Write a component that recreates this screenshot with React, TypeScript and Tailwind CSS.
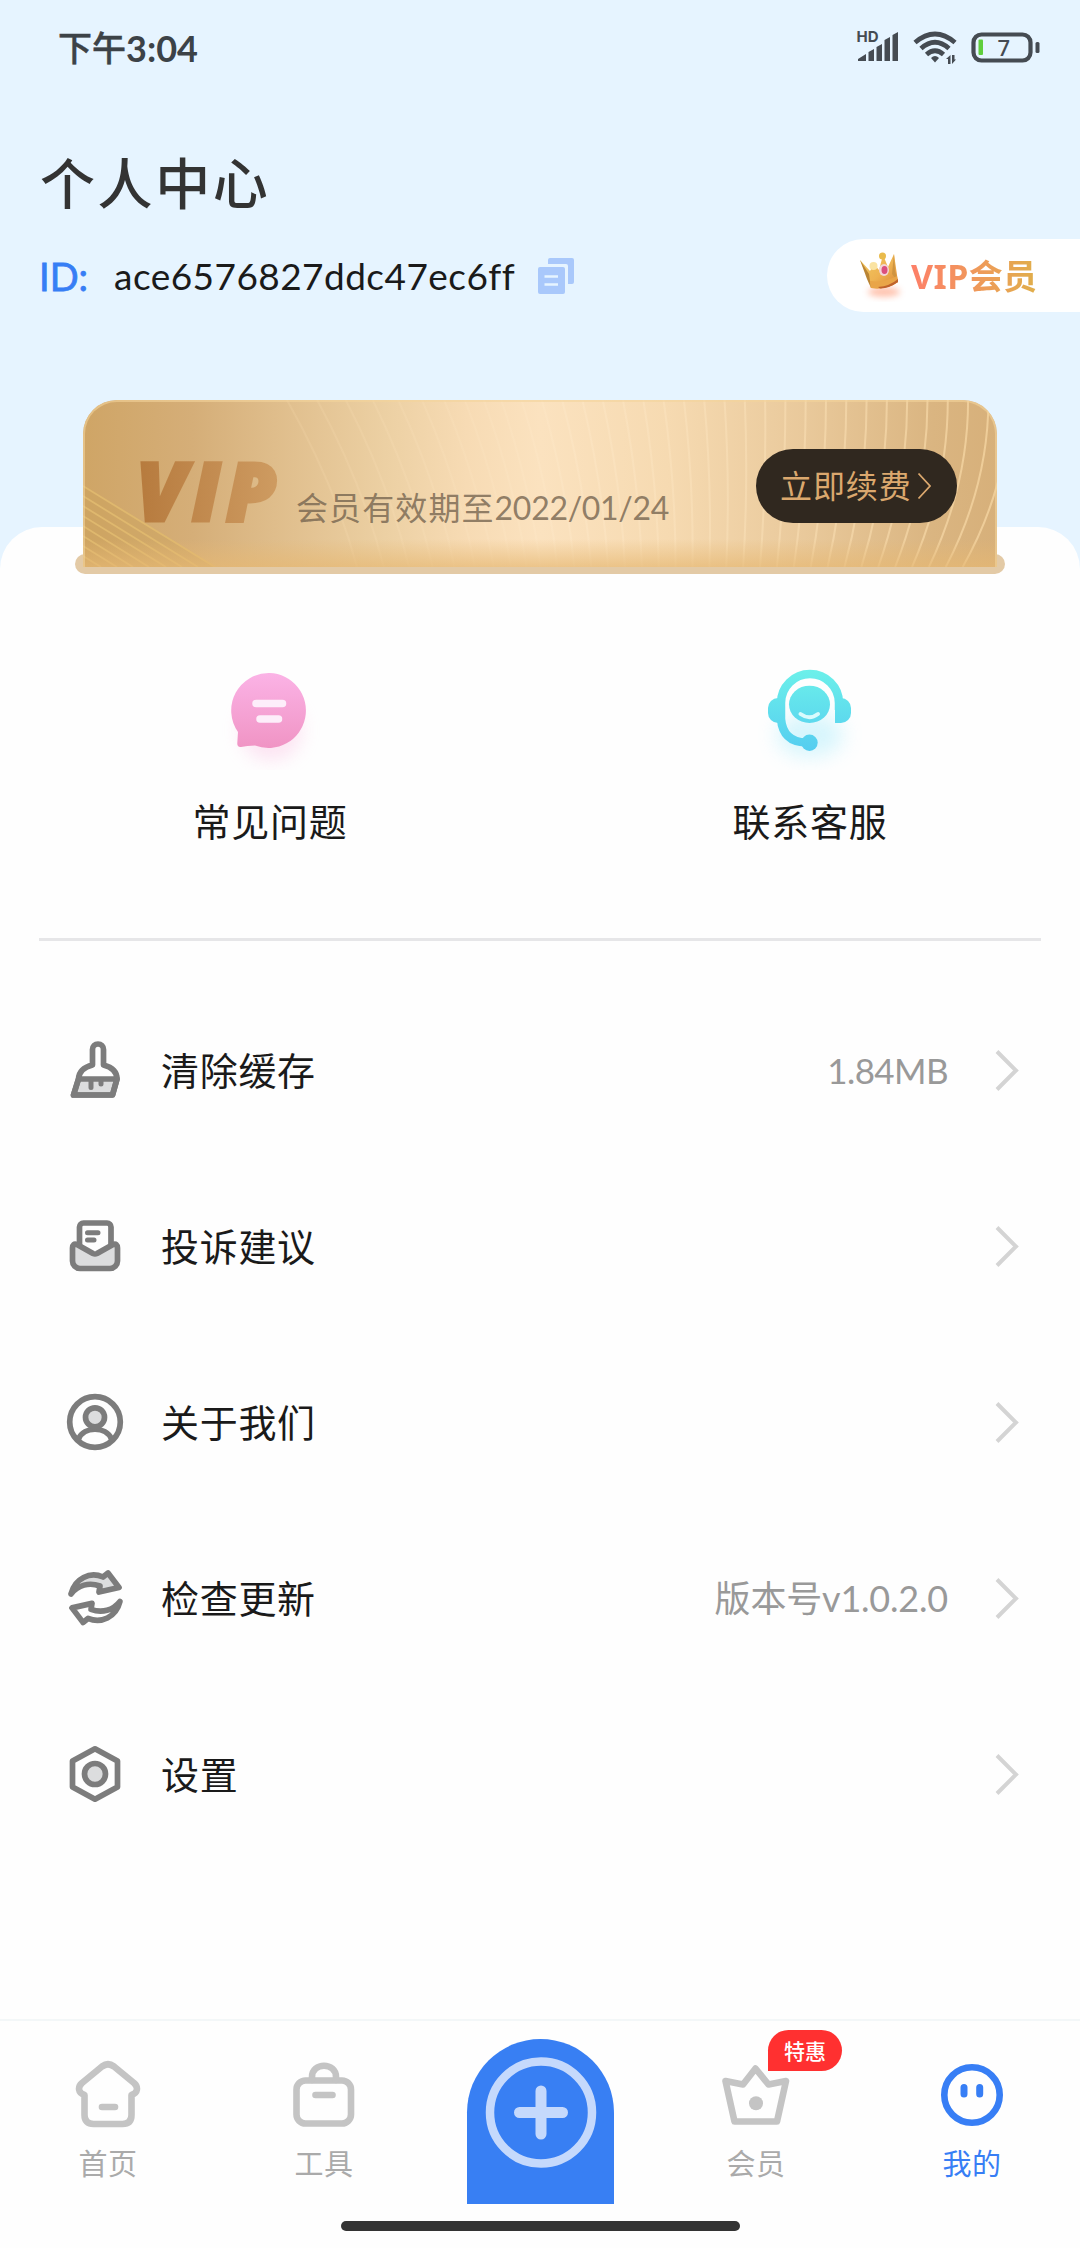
import React from 'react'
import clsx from 'clsx'

type IconProps = {
    children: React.ReactNode
}

const MenuIcon = ({ children }: IconProps) => (
    <svg className="mt-0.5" width="60" height="60" viewBox="0 0 60 60" fill="none" stroke="#7c7c7c" strokeWidth="5.700" strokeLinecap="round" strokeLinejoin="round">
        {children}
    </svg>
)

const TabIcon = ({ children }: IconProps) => (
    <svg width="72" height="72" viewBox="0 0 72 72" fill="none" stroke="currentColor" strokeWidth="6.600" strokeLinecap="round" strokeLinejoin="round">
        {children}
    </svg>
)

const menuItems = [
    {
        label: '清除缓存',
        value: '1.84MB',
        valueClass: 'text-[35px] tracking-[-0.600px]',
        icon: (
            <MenuIcon>
                <path d="M13.500 38H52L47.500 54H8.500Z" fill="#dcddde" />
                <path d="M27.500 24V8.500a5.500 5.500 0 0 1 11 0V24C46 26 52 30 52 38L47.500 54H8.500L13.500 38C14 30 19 26 27.500 24Z" />
                <path d="M26 39v7.500M36 39v4" strokeWidth="5" />
            </MenuIcon>
        ),
    },
    {
        label: '投诉建议',
        value: '',
        icon: (
            <MenuIcon>
                <path d="M14.500 27V10a4 4 0 0 1 4-4H42a4 4 0 0 1 4 4V27" />
                <path d="M7.500 31Q7.500 26 12 27.500L28 36.500Q30 37.500 32 36.500L48 27.500Q52.500 26 52.500 31V44a7.500 7.500 0 0 1-7.500 7.500H15a7.500 7.500 0 0 1-7.500-7.500Z" fill="#dcddde" />
                <path d="M22.500 15.700H33M22.500 23H29" strokeWidth="5" />
            </MenuIcon>
        ),
    },
    {
        label: '关于我们',
        value: '',
        icon: (
            <MenuIcon>
                <circle cx="30" cy="29" r="25.300" />
                <path d="M13.500 46C19 33 41 33 46.500 46" />
                <circle cx="30" cy="24.300" r="9.500" fill="#dcddde" />
            </MenuIcon>
        ),
    },
    {
        label: '检查更新',
        value: '版本号v1.0.2.0',
        valueClass: 'text-[36px] tracking-[-0.200px]',
        icon: (
            <MenuIcon>
                <path d="M6 25C10 9 25 2.500 38 8L43 4L54 18.500L34 23L35 17C24 13 13 16 6 25Z" fill="#dcddde" />
                <path d="M6 25C10 9 25 2.500 38 8L43 4L54 18.500L34 23L35 17C24 13 13 16 6 25Z" transform="rotate(180 30.500 28.700)" />
            </MenuIcon>
        ),
    },
    {
        label: '设置',
        value: '',
        icon: (
            <MenuIcon>
                <path d="M30 3.800L52.500 16V42L30 54.200L7.500 42V16Z" />
                <circle cx="30" cy="29" r="10.500" fill="#dcddde" />
            </MenuIcon>
        ),
    },
]

const tabs = [
    {
        label: '首页',
        icon: (
            <TabIcon>
                <path d="M12.500 37C6 35 5.500 29 10 25L30 8.500Q36 4 42 8.500L62 25C66.500 29 66 35 59.500 37V57Q59.500 66 50.500 66H21.500Q12.500 66 12.500 57Z" />
                <path d="M30 49H43" />
            </TabIcon>
        ),
    },
    {
        label: '工具',
        icon: (
            <TabIcon>
                <rect x="8.500" y="22.500" width="54.500" height="43" rx="9" />
                <path d="M24 22V19C24 4 48 4 48 19V22" />
                <path d="M27.500 37H44.500" />
            </TabIcon>
        ),
    },
    { label: '', icon: null },
    {
        label: '会员',
        badge: '特惠',
        icon: (
            <TabIcon>
                <path d="M5.500 23L23 26.500L35.500 10.500L48.500 26.500L66 23L57 63.500H14.500Z" />
                <circle cx="36" cy="45.300" r="7" fill="currentColor" stroke="none" />
            </TabIcon>
        ),
    },
    {
        label: '我的',
        active: true,
        icon: (
            <TabIcon>
                <circle cx="36" cy="37" r="27.700" />
                <path d="M28 29.500V36M43.700 29.500V36" strokeWidth="7" />
            </TabIcon>
        ),
    },
]

const StatusBar = () => (
    <div className="flex h-24 items-center justify-between pl-[58px] pr-[38px] text-[#3c4247]">
        <div className="flex items-center leading-none">
            <span className="text-[34px] font-medium [-webkit-text-stroke:0.500px_#3c4247]">下午</span>
            <span className="text-[36px] font-bold">3:04</span>
        </div>
        <svg width="186" height="40" viewBox="0 0 186 40" fill="#454b52">
            <text x="0.500" y="14" fontSize="15" fontWeight="700" fontFamily="Inter, sans-serif" textLength="22">HD</text>
            <path d="M2 33V31L10 26V33ZM12.500 33V24L18 21V33ZM20.500 33V19L26 16V33ZM28.500 33V12L34 9V33ZM36.500 33V7L42 4V33Z" />
            <g fill="none" stroke="#454b52" strokeWidth="4.800">
                <path d="M59 14.500Q79 -2.500 99 14.500" />
                <path d="M65 20.500Q79 8 93 20.500" />
                <path d="M70.500 26.500Q79 19 87.500 26.500" />
            </g>
            <path d="M75 30Q79 26 83 30L79 34.500Z" />
            <path d="M90 31L94.500 27V36H92V31ZM96 27H98.500V31.500H100L96 36Z" />
            <rect x="117.500" y="6.500" width="57" height="26" rx="8" fill="none" stroke="#454b52" strokeWidth="4.200" />
            <rect x="122.500" y="11.500" width="4.500" height="15.500" rx="1" fill="#5fce3c" />
            <rect x="179.500" y="14" width="4" height="11" rx="1.500" />
            <text x="141.500" y="27.800" fontSize="22" fontWeight="500" fontFamily="Noto Sans, sans-serif">7</text>
        </svg>
    </div>
)

const CopyIcon = () => (
    <svg width="36" height="36" viewBox="0 0 36 36">
        <path d="M10 2a2 2 0 0 1 2-2H34a2 2 0 0 1 2 2V24a2 2 0 0 1-2 2H30V8a2 2 0 0 0-2-2H10Z" fill="#a9c8fb" />
        <rect y="9" width="27" height="27" rx="2" fill="#a9c8fb" />
        <path d="M6.500 18.500H20M6.500 26.500H20" stroke="#e6f4ff" strokeWidth="2.600" />
    </svg>
)

const CrownIcon = () => (
    <svg width="48" height="52" viewBox="0 0 48 52">
        <defs>
            <linearGradient id="crown" x1="0" y1="0" x2="1" y2="1">
                <stop offset="0" stopColor="#f3cb62" />
                <stop offset="0.550" stopColor="#eeb352" />
                <stop offset="1" stopColor="#d98432" />
            </linearGradient>
            <filter id="crownGlow" x="-40%" y="-80%" width="180%" height="260%">
                <feGaussianBlur stdDeviation="3" />
            </filter>
        </defs>
        <ellipse cx="25" cy="42" rx="16" ry="5" fill="#ffae93" opacity="0.750" filter="url(#crownGlow)" />
        <path d="M1 10L11 21L15 14L20 20L24 5L29 17L35 4L39 32Q28 40 12 38Q9 28 1 10Z" fill="url(#crown)" />
        <path d="M1 10L10 24L12 38L8 29Z" fill="#b98434" />
        <path d="M35 4L36 21L39 32L33 24Z" fill="#cf9440" />
        <path d="M11 31Q25 33 38 26L39 32Q28 40 12 38Z" fill="#e9a548" />
        <path d="M19 37Q31 36 39 29V32Q29 39 21 38.500Z" fill="#bf622c" />
        <circle cx="14.500" cy="16" r="4" fill="#fae3a2" />
        <circle cx="23.500" cy="6" r="3.500" fill="#e9bb4c" />
        <ellipse cx="25" cy="20" rx="5" ry="6" fill="#f3d5d8" />
        <ellipse cx="25.500" cy="20" rx="3" ry="4" fill="#db4f7d" />
    </svg>
)

// Decorative curves of the membership card, leaning right at the left end and left at the right end
const CardPattern = () => {
    const curves = Array.from({ length: 35 }, (_, i) => {
        const t = i / 34
        const x = i < 9 ? 204 + i * 31 - i * i * 0.8 : 418.200 + (i - 9) * 20.300
        const mid = 48 - 48 * Math.min(1, t * 1.500)
        const end = 70 - 116 * t
        return `M${x} 0Q${x + mid} 85 ${x + end} 167`
    })
    return (
        <svg className="absolute inset-0" width="915" height="167" viewBox="0 0 915 167" fill="none">
            <defs>
                <linearGradient id="curves" gradientUnits="userSpaceOnUse" x1="200" y1="0" x2="915" y2="0">
                    <stop offset="0" stopColor="#f3d5a6" stopOpacity="0.250" />
                    <stop offset="0.400" stopColor="#ffebcd" stopOpacity="0.300" />
                    <stop offset="0.700" stopColor="#fae0b6" stopOpacity="0.550" />
                    <stop offset="1" stopColor="#f6d6a2" stopOpacity="0.750" />
                </linearGradient>
            </defs>
            <path d={curves.join('')} stroke="url(#curves)" strokeWidth="2" />
            <path d="M0 86L132 167H0Z" fill="#cda35e" fillOpacity="0.450" />
            <path
                d="M0 86L132 167M0 96L115 167M0 106L99 167M0 116L83 167M0 126L66 167M0 136L50 167M0 146L34 167M0 156L18 167"
                stroke="#dfb86e"
                strokeWidth="1.800"
            />
        </svg>
    )
}

const VipCard = () => (
    <div className="relative ml-[75px] -mt-[127px] h-[174px] w-[930px]">
        <div className="absolute inset-x-0 bottom-0 h-5 rounded-[10px] bg-[#e3caa6]" />
        <div className="relative mx-2 flex h-[167px] items-start overflow-hidden rounded-t-[34px] bg-[linear-gradient(90deg,#cfa566_0%,#d5ae78_12%,#dfbd8b_21%,#ecd0a3_33%,#f7dbb4_42%,#fbe2bf_50%,#f6dab1_64%,#e9c99b_79%,#dab581_93%,#d7b07a_100%)]">
            <CardPattern />
            <div className="absolute inset-x-0 bottom-0 h-7 bg-gradient-to-b from-transparent to-[#e6b873]/70" />
            <div className="absolute inset-0 rounded-t-[34px] border-2 border-b-0 border-[#f3d49b]/60" />
            <span className="relative ml-[53px] mt-[49px] w-[154px] bg-gradient-to-r from-[#b67a3d] to-[#d09e64] bg-clip-text font-['Open_Sans'] text-[82px] font-extrabold italic leading-[80px] tracking-[5px] text-transparent [-webkit-text-stroke:3px_transparent]">
                VIP
            </span>
            <span className="relative ml-[6px] mt-[84px] whitespace-nowrap text-[32px] leading-[48px] text-[#75644f]/80">
                <span className="tracking-[1.100px]">会员有效期至</span>
                <span className="tracking-[-0.300px]">2022/01/24</span>
            </span>
            <button className="absolute right-10 top-[49px] flex h-[74px] w-[201px] items-center rounded-full bg-[#30281f] pl-6 text-[#dba86e]">
                <span className="text-[32px] leading-none tracking-[0.900px]">立即续费</span>
                <svg className="ml-[5px]" width="15" height="28" viewBox="0 0 15 28" fill="none" stroke="currentColor" strokeWidth="1.800">
                    <path d="M1.500 1.500L13 14L1.500 26.500" />
                </svg>
            </button>
        </div>
    </div>
)

const FaqIcon = () => (
    <svg width="120" height="120" viewBox="0 0 120 120">
        <defs>
            <linearGradient id="faq" x1="0" y1="0" x2="0" y2="1">
                <stop offset="0" stopColor="#fbb3e6" />
                <stop offset="1" stopColor="#f094c4" />
            </linearGradient>
            <filter id="faqGlow" x="-50%" y="-50%" width="200%" height="200%">
                <feGaussianBlur stdDeviation="9" />
            </filter>
        </defs>
        <circle cx="61" cy="80" r="31" fill="#f9b5dd" opacity="0.350" filter="url(#faqGlow)" />
        <path d="M59.500 23a37.500 37.500 0 1 1-14.500 72.500Q37 95.500 31 97Q27 97.500 27.300 93L28 82A37.500 37.500 0 0 1 59.500 23Z" fill="url(#faq)" />
        <path d="M46 53.500H72.500M50 69H68.500" stroke="#fdeefa" strokeWidth="7.500" strokeLinecap="round" />
    </svg>
)

const SupportIcon = () => (
    <svg width="120" height="120" viewBox="0 0 120 120">
        <defs>
            <linearGradient id="support" gradientUnits="userSpaceOnUse" x1="0" y1="20" x2="0" y2="101">
                <stop offset="0" stopColor="#6cf0ea" />
                <stop offset="1" stopColor="#55cdf0" />
            </linearGradient>
            <filter id="supportGlow" x="-50%" y="-50%" width="200%" height="200%">
                <feGaussianBlur stdDeviation="10" />
            </filter>
        </defs>
        <ellipse cx="60" cy="85" rx="33" ry="22" fill="#8fe6fa" opacity="0.350" filter="url(#supportGlow)" />
        <path d="M89 60V53a29 29 0 0 0-58 0V69Q33 92 56 92.500" fill="none" stroke="url(#support)" strokeWidth="8.500" />
        <g fill="url(#support)">
            <path d="M35 48H28a10 10 0 0 0-10 10V63a10 10 0 0 0 10 10H35Z" />
            <path d="M85 48H91a10 10 0 0 1 10 10V63a10 10 0 0 1-10 10H85Z" />
            <circle cx="59.500" cy="92.700" r="8.200" />
            <ellipse cx="59.500" cy="54.300" rx="20.500" ry="18.600" />
        </g>
        <path d="M50.500 64Q59.500 70.500 68 64" fill="none" stroke="#d9fbfd" strokeWidth="4" strokeLinecap="round" />
    </svg>
)

const App = () => {
    return (
        <div className="flex h-[2248px] w-[1080px] flex-col overflow-hidden bg-[#e6f4ff] font-['Lato','Noto_Sans_CJK_SC',sans-serif] text-[#1a1a1a]">
            {/* Header */}
            <header className="h-[527px] shrink-0">
                <StatusBar />
                <h1 className="mt-[47px] pl-10 text-[55px] font-medium leading-[80px] tracking-[2.600px] text-[#333]">个人中心</h1>
                <div className="mt-4 flex h-[73px] items-center pl-[39px]">
                    <span className="text-[38px] leading-none text-[#377ef5] [-webkit-text-stroke:0.800px_#377ef5]">ID:</span>
                    <span className="ml-[26px] text-[37px] leading-none tracking-[0.450px] [font-variant-ligatures:none]">ace6576827ddc47ec6ff</span>
                    <div className="ml-auto mr-[253px]">
                        <CopyIcon />
                    </div>
                    <div className="flex h-[73px] w-[253px] items-center rounded-l-full bg-white pl-8">
                        <CrownIcon />
                        <span className="ml-1 whitespace-nowrap bg-gradient-to-r from-[#fd7f68] to-[#e0ae4a] bg-clip-text font-['Noto_Sans','Noto_Sans_CJK_SC',sans-serif] text-[34px] font-bold leading-[50px] tracking-[0.400px] text-transparent">
                            VIP会员
                        </span>
                    </div>
                </div>
            </header>

            {/* Content sheet */}
            <main className="flex-1 rounded-t-[42px] bg-[#fefefe]">
                <VipCard />
                <div className="mt-[76px] grid grid-cols-2 text-[38px] leading-[60px] tracking-[0.700px]">
                    <div className="flex flex-col items-center gap-[21px]">
                        <FaqIcon />
                        <span>常见问题</span>
                    </div>
                    <div className="flex flex-col items-center gap-[21px]">
                        <SupportIcon />
                        <span>联系客服</span>
                    </div>
                </div>
                <div className="mx-[39px] mt-[87px] h-[3px] bg-[#e6e6e8]" />
                <ul className="mt-[41px]">
                    {menuItems.map((item) => (
                        <li key={item.label} className="flex h-[176px] items-center pl-[65px] pr-[61px]">
                            {item.icon}
                            <span className="ml-9 text-[38px] leading-[60px] tracking-[0.700px]">{item.label}</span>
                            <span className={clsx('ml-auto mr-[47px] leading-[60px] text-[#999]', item.valueClass)}>
                                {item.value}
                            </span>
                            <svg className="mt-0.5" width="24" height="42" viewBox="0 0 24 42" fill="none" stroke="#d4d4d4" strokeWidth="4">
                                <path d="M2 1.500L21 20.500L2 39.500" />
                            </svg>
                        </li>
                    ))}
                </ul>
            </main>

            {/* Bottom navigation */}
            <footer className="h-[229px] shrink-0 border-t-2 border-[#f3f7f8] bg-[#fefefe]">
                <nav className="grid h-[200px] grid-cols-5">
                    {tabs.map((tab) =>
                        tab.icon ? (
                            <div
                                key={tab.label}
                                className={clsx('relative flex flex-col items-center gap-3 pt-[37px]', tab.active ? 'text-[#377ef5]' : 'text-[#c4c4c4]')}
                            >
                                {tab.icon}
                                <span className={clsx('text-[29px] leading-[44px] tracking-[0.500px]', !tab.active && 'text-[#aaa]')}>{tab.label}</span>
                                {tab.badge && (
                                    <span className="absolute left-[120px] top-[9px] flex h-[41px] w-[74px] items-center justify-center rounded-[20.500px] rounded-bl-none bg-[#ff3030] text-[21px] font-medium text-white">
                                        {tab.badge}
                                    </span>
                                )}
                            </div>
                        ) : (
                            <div key="add" className="mx-auto mt-[18px] h-[165px] w-[147px] rounded-t-full bg-[#387ff3]">
                                <svg width="147" height="147" viewBox="0 0 147 147" fill="none" stroke="#c5d9fc">
                                    <circle cx="74" cy="73.500" r="51" strokeWidth="8.500" />
                                    <path d="M74 52V95M52.500 73.500H95.500" strokeWidth="11" strokeLinecap="round" />
                                </svg>
                            </div>
                        )
                    )}
                </nav>
                <div className="mx-auto h-[10px] w-[399px] rounded-full bg-[#333]" />
            </footer>
        </div>
    )
}

export default App
